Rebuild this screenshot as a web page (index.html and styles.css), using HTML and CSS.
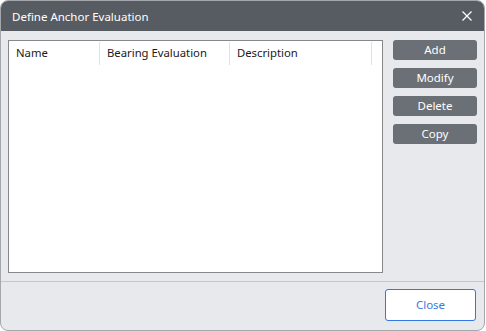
FILE: index.html
```html
<!DOCTYPE html>
<html>
<head>
<meta charset="utf-8">
<link rel="stylesheet" href="styles.css">
</head>
<body>
<div class="window">
  <div class="titlebar">
    <span class="title">Define Anchor Evaluation</span>
    <svg class="close-x" width="10" height="10" viewBox="0 0 10 10"><path d="M0.5 0.5L9.5 9.5M9.5 0.5L0.5 9.5" stroke="#fff" stroke-width="1.2" fill="none"/></svg>
  </div>
  <div class="content">
    <div class="listbox">
      <div class="header">
        <div class="col c1">Name</div>
        <div class="col c2">Bearing Evaluation</div>
        <div class="col c3">Description</div>
      </div>
    </div>
    <div class="side">
      <button class="btn">Add</button>
      <button class="btn">Modify</button>
      <button class="btn">Delete</button>
      <button class="btn">Copy</button>
    </div>
  </div>
  <div class="footer">
    <button class="close-btn">Close</button>
  </div>
</div>
</body>
</html>
```
FILE: styles.css
```css
html, body { margin: 0; padding: 0; background: #ffffff; }
body { font-family: "Segoe UI", "Noto Sans", "Open Sans", sans-serif; font-size: 11.3px; }
.window {
  width: 483px; height: 329px;
  border: 1px solid #a4a7ab;
  border-radius: 8px;
  background: #e8e9ec;
  overflow: hidden;
  display: flex; flex-direction: column;
}
.titlebar {
  height: 30px; background: #575c63;
  display: flex; align-items: center; justify-content: space-between;
  padding: 0 12px 0 11px;
  color: #ffffff;
}
.title { font-size: 11.5px; }
.close-x { display: block; }
.content {
  display: flex; padding: 9px 0 0 7px; height: 233px;
}
.listbox {
  width: 373px; height: 231px;
  background: #ffffff; border: 1px solid #86888c;
}
.header { display: flex; height: 25px; margin-top: 1px; }
.col {
  display: flex; align-items: center; padding: 0 0 2px 7px;
  border-right: 1px solid #e2e2e2; color: #1a1a1a; box-sizing: border-box;
  height: 23px;
}
.c1 { width: 91px; }
.c2 { width: 130px; }
.c3 { width: 142px; }
.side {
  display: flex; flex-direction: column; gap: 8px;
  margin-left: 10px;
}
.btn {
  width: 84px; height: 20px;
  background: #6b6f76; color: #ffffff; border: none; border-radius: 3px;
  font-family: inherit; font-size: 11.5px; padding: 0 0 2px 0;
}
.footer {
  margin-top: 8px;
  border-top: 1px solid #c3c6ca;
  display: flex; justify-content: flex-end;
  padding: 7px 8px 0 0;
}
.close-btn {
  width: 91px; height: 32px;
  background: #ffffff; border: 1px solid #2f78e6; border-radius: 3px;
  color: #3a78e0; font-family: inherit; font-size: 11.5px; padding: 0 0 1px 0;
}
```
